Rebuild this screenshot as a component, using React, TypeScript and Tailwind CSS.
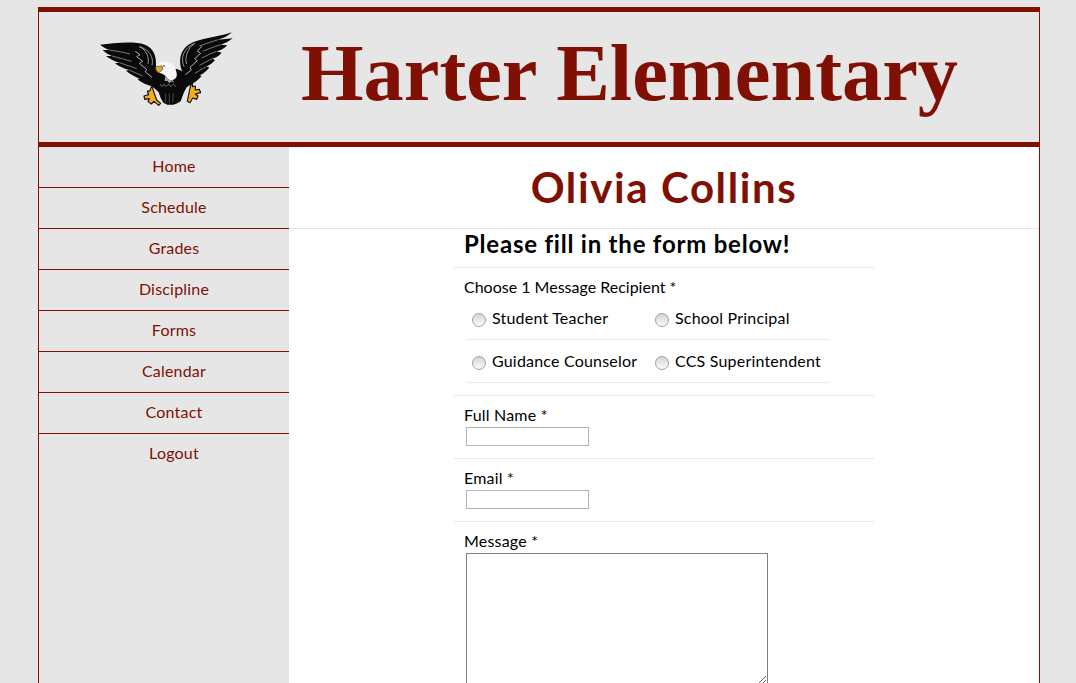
const nav = ["Home", "Schedule", "Grades", "Discipline", "Forms", "Calendar", "Contact", "Logout"];

function Eagle() {
  return (
    <svg viewBox="0 0 450 270" className="w-[150px] h-[90px] shrink-0">
      <path fill="#0a0a0a" d="M30 62 C70 58 130 50 165 62 C190 72 200 95 198 128 L215 135 L262 135 L276 142 C265 110 270 80 295 62 C330 42 385 40 425 25 C412 38 400 42 385 47 L428 43 C415 54 405 58 392 62 L412 64 C400 76 390 80 380 82 L395 86 C385 98 375 102 366 104 L375 108 C365 120 355 126 348 128 L358 130 C348 145 335 152 328 154 L335 156 C325 168 312 178 302 182 L290 190 L282 205 L272 232 L262 238 L250 242 L232 242 L220 236 L212 222 L206 205 L190 190 L172 182 C160 178 150 172 142 164 L150 164 C135 158 120 150 108 140 L118 138 C100 134 85 126 75 118 L88 116 C72 112 58 104 48 96 L66 96 C55 92 45 86 38 78 L58 78 C48 74 38 68 30 62 Z" />
      <g fill="none" stroke="#e6e6e6" strokeWidth="1.5">
        <path d="M58 78 C80 82 100 84 120 90" />
        <path d="M66 96 C85 102 105 106 125 112" />
        <path d="M88 116 C105 122 125 128 140 134" />
        <path d="M118 138 C130 144 145 150 158 156" />
        <path d="M385 47 C365 53 345 60 328 66" />
        <path d="M392 62 C375 68 355 74 338 82" />
        <path d="M380 82 C365 88 350 94 335 102" />
        <path d="M366 104 C355 110 340 118 328 124" />
        <path d="M348 128 C338 134 325 142 315 148" />
      </g>
      <g fill="none" stroke="#b0b0b0" strokeLinejoin="round">
        <path d="M186 124 C192 100 178 76 148 68 C170 78 178 100 174 120" strokeWidth="2.5" />
        <path d="M282 128 C270 100 282 72 314 58 C292 74 284 100 290 120" strokeWidth="2.5" />
        <path d="M136 82 L150 92 L140 98 L158 112 L148 118 L170 136 L166 144 L186 160" strokeWidth="3" />
        <path d="M336 66 L322 82 L332 88 L314 104 L322 110 L300 130 L304 138 L286 152" strokeWidth="3" />
      </g>
      <path fill="#f6f6f6" d="M197 132 C200 118 218 110 235 114 C250 118 257 130 260 148 C262 160 256 166 248 168 C240 170 232 166 226 156 C222 150 214 148 206 146 C200 144 197 140 197 132 Z" />
      <path fill="#a8a8a8" d="M226 156 C232 166 240 170 248 168 L252 176 L244 172 L238 178 L232 170 L224 172 Z" />
      <path fill="#e8a820" stroke="#111" strokeWidth="1.5" d="M196 128 L216 126 L218 136 L208 146 L200 142 Z" />
      <circle cx="222" cy="126" r="2.5" fill="#111" />
      <g fill="none" stroke="#9a9a9a" strokeWidth="2">
        <path d="M210 180 L216 188 L222 180 L228 188 L236 180 L242 188 L250 180 L258 188" />
      </g>
      <g fill="none" stroke="#666" strokeWidth="2">
        <path d="M226 208 L226 236 M238 208 L238 238 M250 208 L248 236" />
      </g>
      <g fill="#f0ad1e" stroke="#111" strokeWidth="3.5" strokeLinejoin="round">
        <path d="M186 184 L190 200 L200 228 L212 238 L206 244 L192 232 L184 240 L174 232 L178 224 L164 226 L162 216 L176 212 L172 202 L180 200 Z" />
        <path d="M306 172 L300 192 L292 232 L300 236 L308 222 L320 226 L324 216 L316 210 L332 206 L328 196 L316 198 L316 186 L308 188 Z" />
      </g>
    </svg>
  );
}

function Radio({ label }: { label: string }) {
  return (
    <label className="flex w-[181px] h-[43px] items-start pt-[11px] pl-[6px] border-b border-[#e8e8e8]">
      <input
        type="radio"
        name="recipient"
        className="appearance-none w-[14px] h-[14px] mt-[5px] mr-[6px] rounded-full border border-[#a0a0a0] bg-linear-to-b from-[#d4d4d4] to-[#fbfbfb]"
      />
      <span className="leading-[20px] whitespace-nowrap tracking-[0.2px]">{label}</span>
    </label>
  );
}

export default function App() {
  return (
    <div className="h-[683px] overflow-hidden bg-[#e6e6e6] pt-[7px] font-['Lato','Noto_Sans',sans-serif] text-[16px] text-black">
      <div className="ml-[38px] w-[1002px] h-[700px] border-x border-[#7f1003] bg-white flex flex-col">
        <header className="h-[140px] shrink-0 border-y-[5px] border-[#7f1003] bg-[#e6e6e6] flex items-start">
          <div className="ml-[51px] mt-[12px]"><Eagle /></div>
          <h1 className="ml-[61px] mt-[16px] font-['Liberation_Serif',serif] font-bold text-[80.4px] leading-[90px] text-[#7f1003] whitespace-nowrap">
            Harter Elementary
          </h1>
        </header>
        <div className="flex flex-1">
          <nav className="w-[250px] shrink-0 bg-[#e6e6e6]">
            {nav.map((n, i) => (
              <div
                key={n}
                className={`h-[41px] flex items-center justify-center pl-[20px] pb-[2px] tracking-[0.2px] text-[#7f1003] border-b ${i < nav.length - 1 ? "border-[#7f1003]" : "border-transparent"}`}
              >
                {n}
              </div>
            ))}
          </nav>
          <main className="flex-1">
            <div className="h-[82px] border-b border-[#e6e6e6] flex items-center justify-center pb-[2px]">
              <h2 className="font-bold text-[42px] leading-[50px] tracking-[1.6px] text-[#7f1003]">Olivia Collins</h2>
            </div>
            <form className="ml-[165px] w-[420px]">
              <div className="h-[39px] border-b border-[#e8e8e8] pl-[10px]">
                <h3 className="font-bold text-[24px] leading-[30px] tracking-[0.78px]">Please fill in the form below!</h3>
              </div>
              <div className="h-[128px] border-b border-[#e8e8e8] pt-[9px] pl-[10px]">
                <div className="leading-[20px]">Choose 1 Message Recipient *</div>
                <div className="ml-[2px] grid grid-cols-[181px_181px] gap-x-[2px]">
                  <Radio label="Student Teacher" />
                  <Radio label="School Principal" />
                  <Radio label="Guidance Counselor" />
                  <Radio label="CCS Superintendent" />
                </div>
              </div>
              <div className="h-[63px] border-b border-[#e8e8e8] pt-[9px] pl-[10px]">
                <div className="leading-[20px] tracking-[0.2px]">Full Name *</div>
                <input className="block ml-[2px] mt-[2px] w-[123px] h-[19px] border border-[#b4b4b4] bg-white" />
              </div>
              <div className="h-[63px] border-b border-[#e8e8e8] pt-[9px] pl-[10px]">
                <div className="leading-[20px] tracking-[0.2px]">Email *</div>
                <input className="block ml-[2px] mt-[2px] w-[123px] h-[19px] border border-[#b4b4b4] bg-white" />
              </div>
              <div className="pt-[9px] pl-[10px]">
                <div className="leading-[20px] tracking-[0.2px]">Message *</div>
                <textarea className="block ml-[2px] mt-[2px] w-[302px] h-[132px] border border-[#808080] bg-white" />
              </div>
            </form>
          </main>
        </div>
      </div>
    </div>
  );
}
